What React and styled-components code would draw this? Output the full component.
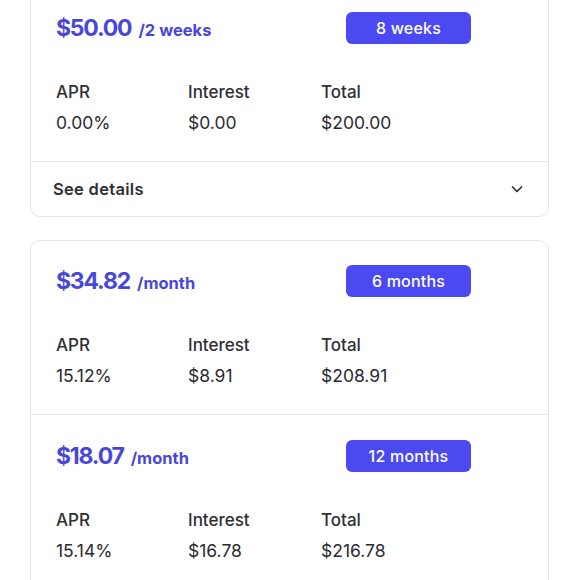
import styled, { createGlobalStyle } from "styled-components";

const GlobalStyle = createGlobalStyle`
  body {
    margin: 0;
    background: #ffffff;
    font-family: Inter, "Noto Sans", sans-serif;
    color: #2d2d33;
  }
`;

const Page = styled.div`
  padding: 0 31px 0 30px;
  margin-top: -13px;
  display: flex;
  flex-direction: column;
  gap: 23px;
`;

const Card = styled.div`
  border: 1px solid #e6e6e8;
  border-radius: 10px;
  background: #fff;
  overflow: hidden;
`;

const Plan = styled.div`
  padding: 24px 25px 26px 25px;
  & + & {
    border-top: 1px solid #e6e6e8;
    padding-top: 25px;
  }
`;

const Header = styled.div`
  display: grid;
  grid-template-columns: 290px 125px;
  align-items: center;
  height: 32px;
`;

const Price = styled.div`
  color: #4947d8;
  font-size: 23px;
  font-weight: 700;
  letter-spacing: -1.2px;
  white-space: nowrap;
  span {
    font-size: 16.5px;
    font-weight: 700;
    margin-left: 7px;
    letter-spacing: 0;
  }
`;

const Pill = styled.div`
  height: 32px;
  border-radius: 6px;
  background: #4b4af2;
  color: #fff;
  font-size: 16px;
  font-weight: 500;
  letter-spacing: 0.2px;
  display: flex;
  align-items: center;
  justify-content: center;
`;

const Stats = styled.div`
  display: grid;
  grid-template-columns: 132px 133px 133px;
  margin-top: 36px;
  row-gap: 7px;
  font-size: 17px;
  line-height: 24px;
`;

const Label = styled.div`
  font-weight: 500;
  color: #2f2f36;
`;

const Value = styled.div`
  font-weight: 400;
  font-size: 17.5px;
  color: #2b2b31;
`;

const Details = styled.div`
  border-top: 1px solid #e6e6e8;
  height: 54px;
  padding: 0 24px 0 22px;
  display: flex;
  align-items: center;
  justify-content: space-between;
  font-size: 16.5px;
  font-weight: 600;
  color: #2f2f36;
  letter-spacing: 0.3px;
`;

const Chevron = () => (
  <svg width="14" height="14" viewBox="0 0 14 14" fill="none">
    <path d="M2.5 5 L7 9.5 L11.5 5" stroke="#2f2f36" strokeWidth="1.7" strokeLinecap="round" strokeLinejoin="round" />
  </svg>
);

function PlanRow({ price, per, term, apr, interest, total }) {
  return (
    <Plan>
      <Header>
        <Price>
          {price}
          <span>{per}</span>
        </Price>
        <Pill>{term}</Pill>
      </Header>
      <Stats>
        <Label>APR</Label>
        <Label>Interest</Label>
        <Label>Total</Label>
        <Value>{apr}</Value>
        <Value>{interest}</Value>
        <Value>{total}</Value>
      </Stats>
    </Plan>
  );
}

export default function App() {
  return (
    <>
      <GlobalStyle />
      <Page>
        <Card>
          <PlanRow price="$50.00" per="/2 weeks" term="8 weeks" apr="0.00%" interest="$0.00" total="$200.00" />
          <Details>
            See details
            <Chevron />
          </Details>
        </Card>
        <Card>
          <PlanRow price="$34.82" per="/month" term="6 months" apr="15.12%" interest="$8.91" total="$208.91" />
          <PlanRow price="$18.07" per="/month" term="12 months" apr="15.14%" interest="$16.78" total="$216.78" />
        </Card>
      </Page>
    </>
  );
}
